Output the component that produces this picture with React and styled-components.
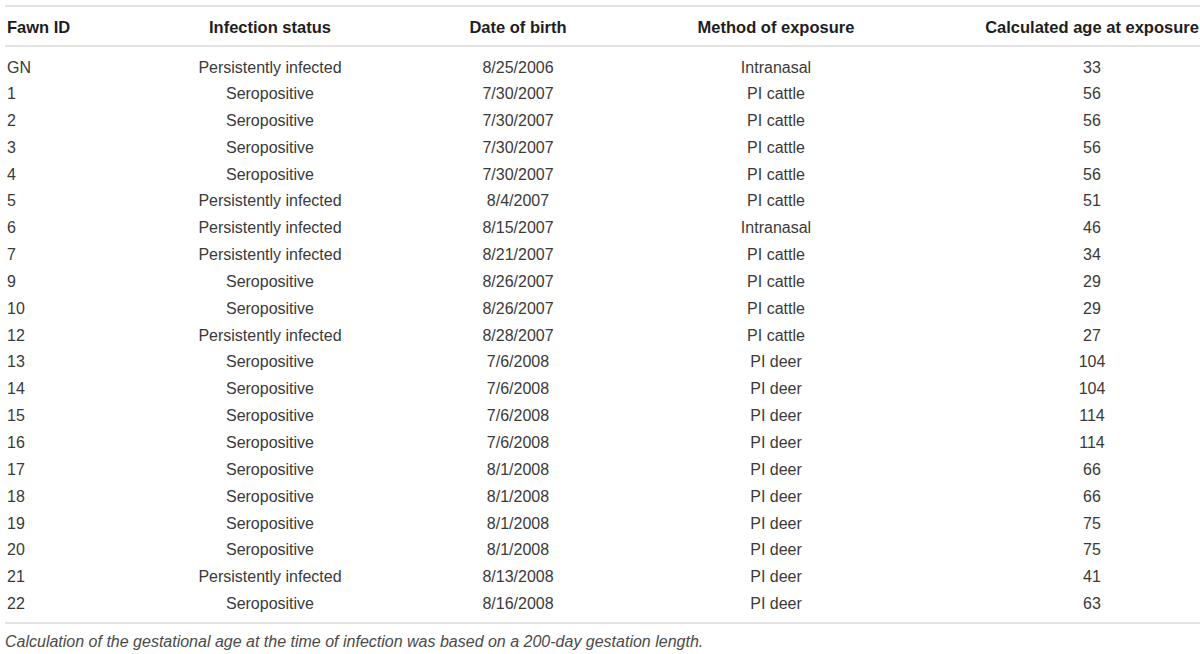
import React from 'react';
import styled, { createGlobalStyle } from 'styled-components';

const GlobalStyle = createGlobalStyle`
  html, body {
    margin: 0;
    padding: 0;
    background: #ffffff;
    overflow: hidden;
  }
  body {
    font-family: "Liberation Sans", Arial, sans-serif;
  }
`;

const Page = styled.div`
  width: 1195px;
  height: 649px;
  overflow: hidden;
  padding: 5px 0 0 5px;
`;

const Table = styled.table`
  width: 1273px;
  table-layout: fixed;
  border-collapse: collapse;
  font-size: 16px;
  color: #3a3a3a;
  border-top: 2px solid #e3e3e3;
  border-bottom: 2px solid #e3e3e3;
`;

const HeadCell = styled.th`
  height: 36px;
  padding: 2px 0 0 0;
  font-size: 16.5px;
  font-weight: 700;
  color: #1e1e1e;
  text-align: ${(p) => (p.$left ? 'left' : 'center')};
  padding-left: ${(p) => (p.$left ? '2px' : '0')};
  border-bottom: 2px solid #e3e3e3;
  white-space: nowrap;
`;

const Row = styled.tr`
  height: 26.85px;
  &:first-child {
    height: 34.6px;
  }
  &:first-child td {
    padding-top: 8px;
  }
  &:last-child {
    height: 32.5px;
  }
  &:last-child td {
    padding-bottom: 5px;
  }
`;

const Cell = styled.td`
  padding: 0;
  text-align: ${(p) => (p.$left ? 'left' : 'center')};
  padding-left: ${(p) => (p.$left ? '2px' : '0')};
  white-space: nowrap;
`;

const Note = styled.p`
  margin: 9px 0 0 0;
  font-size: 16px;
  font-style: italic;
  color: #4a4a4a;
  white-space: nowrap;
`;

const columns = [
  { label: 'Fawn ID', width: 145, left: true },
  { label: 'Infection status', width: 240 },
  { label: 'Date of birth', width: 256 },
  { label: 'Method of exposure', width: 260 },
  { label: 'Calculated age at exposure', width: 372 },
];

const PI = 'Persistently infected';
const SP = 'Seropositive';

const rows = [
  ['GN', PI, '8/25/2006', 'Intranasal', '33'],
  ['1', SP, '7/30/2007', 'PI cattle', '56'],
  ['2', SP, '7/30/2007', 'PI cattle', '56'],
  ['3', SP, '7/30/2007', 'PI cattle', '56'],
  ['4', SP, '7/30/2007', 'PI cattle', '56'],
  ['5', PI, '8/4/2007', 'PI cattle', '51'],
  ['6', PI, '8/15/2007', 'Intranasal', '46'],
  ['7', PI, '8/21/2007', 'PI cattle', '34'],
  ['9', SP, '8/26/2007', 'PI cattle', '29'],
  ['10', SP, '8/26/2007', 'PI cattle', '29'],
  ['12', PI, '8/28/2007', 'PI cattle', '27'],
  ['13', SP, '7/6/2008', 'PI deer', '104'],
  ['14', SP, '7/6/2008', 'PI deer', '104'],
  ['15', SP, '7/6/2008', 'PI deer', '114'],
  ['16', SP, '7/6/2008', 'PI deer', '114'],
  ['17', SP, '8/1/2008', 'PI deer', '66'],
  ['18', SP, '8/1/2008', 'PI deer', '66'],
  ['19', SP, '8/1/2008', 'PI deer', '75'],
  ['20', SP, '8/1/2008', 'PI deer', '75'],
  ['21', PI, '8/13/2008', 'PI deer', '41'],
  ['22', SP, '8/16/2008', 'PI deer', '63'],
];

const App = () => {
  return (
    <Page>
      <GlobalStyle />
      <Table>
        <colgroup>
          {columns.map((c) => (
            <col key={c.label} style={{ width: c.width }} />
          ))}
        </colgroup>
        <thead>
          <tr>
            {columns.map((c) => (
              <HeadCell key={c.label} $left={c.left}>{c.label}</HeadCell>
            ))}
          </tr>
        </thead>
        <tbody>
          {rows.map((r) => (
            <Row key={r[0]}>
              {r.map((v, i) => (
                <Cell key={i} $left={columns[i].left}>{v}</Cell>
              ))}
            </Row>
          ))}
        </tbody>
      </Table>
      <Note>
        Calculation of the gestational age at the time of infection was based on a 200-day gestation length.
      </Note>
    </Page>
  );
};

export default App;
